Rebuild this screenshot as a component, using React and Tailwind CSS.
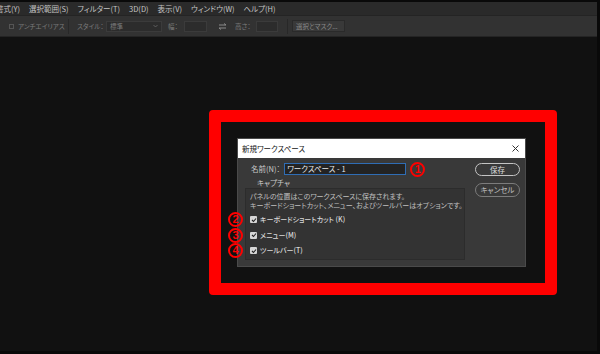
function Circ({ n, className = "" }) {
  return (
    <span className={"w-[15px] h-[15px] rounded-full border-[2px] border-[#ff0000] flex items-center justify-center text-[11px] leading-none font-bold text-[#ff0000] font-['Liberation_Sans',sans-serif] " + className}>
      {n}
    </span>
  );
}

export default function App() {
  const menu = ["書式(Y)", "選択範囲(S)", "フィルター(T)", "3D(D)", "表示(V)", "ウィンドウ(W)", "ヘルプ(H)"];
  const checks = [
    { n: "2", label: "キーボードショートカット (K)" },
    { n: "3", label: "メニュー(M)" },
    { n: "4", label: "ツールバー(T)" },
  ];
  return (
    <div className="w-[600px] h-[354px] bg-[#111111] flex flex-col overflow-hidden border-t-[2px] border-r-[3px] border-b-[3px] border-[#090909] font-['Noto_Sans_CJK_JP',sans-serif] [font-feature-settings:'palt']">
      {/* menu bar */}
      <div className="h-[13px] shrink-0 bg-[#2a2a2a] flex items-center overflow-hidden">
        <div className="flex items-center gap-[9px] -ml-[4px] text-[7.5px] leading-none text-[#c4c4c4] whitespace-nowrap">
          {menu.map((m) => (
            <span key={m}>{m}</span>
          ))}
        </div>
      </div>
      {/* options bar */}
      <div className="h-[22px] shrink-0 bg-[#323232] border-t border-b border-[#242424] flex items-center text-[6.5px] leading-none text-[#7a7a7a] whitespace-nowrap">
        <div className="ml-[9px] w-[5px] h-[5px] border border-[#555]" />
        <span className="ml-[4px] w-[42px]">アンチエイリアス</span>
        <div className="ml-[8px] w-px h-[15px] bg-[#282828]" />
        <span className="ml-[8px] w-[24px]">スタイル：</span>
        <div className="ml-[5px] w-[56px] h-[11px] bg-[#2c2c2c] border border-[#3b3b3b] flex items-center justify-between px-[3px]">
          <span>標準</span>
          <svg width="5" height="4" viewBox="0 0 5 4"><path d="M0.5 1 L2.5 3 L4.5 1" fill="none" stroke="#6a6a6a" strokeWidth="0.8" /></svg>
        </div>
        <span className="ml-[6px] w-[15px]">幅：</span>
        <div className="ml-[1px] w-[23px] h-[11px] bg-[#2c2c2c] border border-[#3b3b3b]" />
        <svg className="ml-[11px]" width="9" height="7" viewBox="0 0 9 7">
          <path d="M1 2 H8 M6 0.5 L8 2 M8 5 H1 M3 6.5 L1 5" fill="none" stroke="#8a8a8a" strokeWidth="1" />
        </svg>
        <span className="ml-[8px] w-[19px]">高さ：</span>
        <div className="ml-[2px] w-[22px] h-[11px] bg-[#2c2c2c] border border-[#3b3b3b]" />
        <div className="ml-[9px] w-px h-[15px] bg-[#282828]" />
        <div className="ml-[4px] w-[53px] h-[12px] bg-[#393939] border border-[#2a2a2a] flex items-center px-[3px] text-[#8a8a8a]">
          選択とマスク...
        </div>
      </div>
      {/* canvas */}
      <div className="flex-1 pl-[209px] pt-[73px]">
        <div className="w-[348px] h-[185px] border-[12px] border-[#ff0000] rounded-[4px] pl-[16px] pt-[16px]">
          <div className="w-[289px] h-[129px] flex flex-col bg-[#393939] border border-[#4a4a4a]">
            <div className="h-[19px] shrink-0 bg-white flex items-center justify-between pl-[4px] pr-[6px]">
              <span className="text-[7.5px] leading-none text-[#111]">新規ワークスペース</span>
              <svg width="7" height="7" viewBox="0 0 7 7">
                <path d="M0.5 0.5 L6.5 6.5 M6.5 0.5 L0.5 6.5" stroke="#333" strokeWidth="1" />
              </svg>
            </div>
            <div className="flex-1 flex pl-[7px]">
              <div className="w-[220px] flex flex-col">
                <div className="mt-[5px] h-[12px] flex items-center">
                  <span className="ml-[6px] text-[7.5px] leading-none text-[#c8c8c8]">名前(N)：</span>
                  <div className="ml-[4px] w-[122px] h-[12px] bg-[#232323] border border-[#2f6db5] flex items-center px-[2px] text-[7.5px] leading-none text-[#e8e8e8]">
                    ワークスペース - 1
                  </div>
                  <Circ n="1" className="ml-[4px] shrink-0" />
                </div>
                <div className="mt-[3px] h-[10px] flex items-center pl-[12px] text-[7.5px] leading-none text-[#c8c8c8]">
                  キャプチャ
                </div>
                <div className="h-[72px] bg-[#333333] border border-[#2c2c2c] pl-[4px] pt-[3px] text-[7px] leading-[9px] text-[#c0c0c0] whitespace-nowrap">
                  <div>パネルの位置はこのワークスペースに保存されます。</div>
                  <div>キーボードショートカット、メニュー、およびツールバーはオプションです。</div>
                  <div className="mt-[2px] flex flex-col">
                    {checks.map((c) => (
                      <div key={c.n} className="relative h-[15.5px] flex items-center">
                        <Circ n={c.n} className="absolute -left-[22px] top-[0px]" />
                        <div className="w-[7px] h-[7px] bg-[#d6d6d6] rounded-[1px] flex items-center justify-center">
                          <svg width="6" height="6" viewBox="0 0 6 6">
                            <path d="M1 3 L2.5 4.5 L5 1.5" fill="none" stroke="#222" strokeWidth="1.1" />
                          </svg>
                        </div>
                        <span className="ml-[3px] text-[7px] leading-none text-[#d8d8d8] font-medium">{c.label}</span>
                      </div>
                    ))}
                  </div>
                </div>
              </div>
              <div className="ml-[10px] pt-[5px] flex flex-col">
                <div className="w-[45px] h-[13px] rounded-full border-[1.5px] border-[#c4c4c4] flex items-center justify-center text-[7.5px] leading-none text-[#dcdcdc]">
                  保存
                </div>
                <div className="mt-[7px] w-[45px] h-[14px] rounded-full border-[1.5px] border-[#7c7c7c] flex items-center justify-center text-[7.5px] leading-none text-[#c0c0c0]">
                  キャンセル
                </div>
              </div>
            </div>
          </div>
        </div>
      </div>
    </div>
  );
}
